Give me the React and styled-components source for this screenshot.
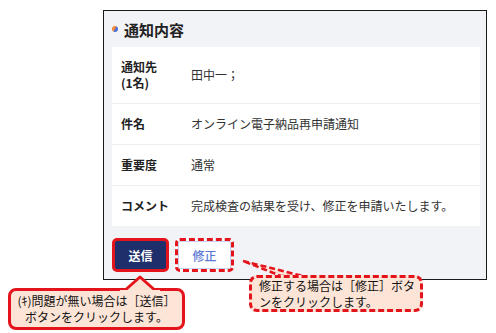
import styled, { createGlobalStyle } from "styled-components";

const GlobalStyle = createGlobalStyle`
  body {
    margin: 0;
    background: #fff;
    font-family: "Noto Sans CJK JP", "Noto Sans", sans-serif;
  }
`;

const rows = [
  { label: ["通知先", "(1名)"], value: "田中一；" },
  { label: ["件名"], value: "オンライン電子納品再申請通知" },
  { label: ["重要度"], value: "通常" },
  { label: ["コメント"], value: "完成検査の結果を受け、修正を申請いたします。" },
];

const App = () => {
  return (
    <Page>
      <GlobalStyle />
      <Frame>
        <Header>
          <Dot />
          <Title>通知内容</Title>
        </Header>
        <Card>
          {rows.map((r) => (
            <Row key={r.value}>
              <Label>
                {r.label.map((l) => (
                  <span key={l}>{l}</span>
                ))}
              </Label>
              <Value>{r.value}</Value>
            </Row>
          ))}
        </Card>
        <Footer>
          <SendButton>送信</SendButton>
          <EditButton>修正</EditButton>
        </Footer>
      </Frame>

      <Tail width="70" height="20" viewBox="0 0 70 20">
        <polygon
          points="2,2 62,17 40,17"
          fill="#fce4d6"
          stroke="#e3141c"
          strokeWidth="2.5"
          strokeDasharray="6 3"
        />
      </Tail>
      <SendNote>
        <Pointer width="40" height="18" viewBox="0 0 40 18">
          <polygon points="3,17 20,2 37,17" fill="#fce4d6" stroke="#e3141c" strokeWidth="3" strokeLinejoin="round" />
          <rect x="0" y="15" width="40" height="4" fill="#fce4d6" />
        </Pointer>
        <NoteLine>(ｷ)問題が無い場合は［送信］</NoteLine>
        <NoteLine>ボタンをクリックします。</NoteLine>
      </SendNote>
      <EditNote>
        <NoteLine>修正する場合は［修正］ボタ</NoteLine>
        <NoteLine>ンをクリックします。</NoteLine>
      </EditNote>
    </Page>
  );
};

const Page = styled.div`
  position: relative;
  width: 496px;
  height: 333px;
  box-sizing: border-box;
  padding: 10px 0 0 103px;
  overflow: hidden;
`;

const Frame = styled.div`
  width: 384px;
  height: 270px;
  box-sizing: border-box;
  border: 1px solid #1a1a1a;
  background: #f2f3f7;
  padding: 0 6px 0 8px;
`;

const Header = styled.div`
  display: flex;
  align-items: center;
  gap: 6px;
  height: 36px;
`;

const Dot = styled.span`
  width: 6px;
  height: 6px;
  border-radius: 50%;
  background: linear-gradient(120deg, #f08a3c 0%, #f08a3c 45%, #4a6fd8 55%, #4a6fd8 100%);
`;

const Title = styled.h2`
  margin: 0;
  font-size: 15px;
  font-weight: 700;
  color: #222;
`;

const Card = styled.div`
  background: #fff;
`;

const Row = styled.div`
  display: grid;
  grid-template-columns: 70px 1fr;
  align-items: center;
  padding: 12px 9px;
  border-bottom: 1px solid #eeeff2;

  &:last-child {
    border-bottom: none;
  }
`;

const Label = styled.div`
  display: flex;
  flex-direction: column;
  font-size: 12px;
  line-height: 16px;
  font-weight: 700;
  color: #222;
`;

const Value = styled.div`
  font-size: 12px;
  line-height: 16px;
  color: #333;
`;

const Footer = styled.div`
  display: flex;
  gap: 6px;
  padding-top: 12px;
`;

const SendButton = styled.button`
  width: 57px;
  height: 34px;
  box-sizing: border-box;
  border: 3px solid #e3141c;
  border-radius: 5px;
  background: #1f2f6b;
  color: #fff;
  font-family: inherit;
  font-size: 12px;
  font-weight: 700;
`;

const EditButton = styled.button`
  width: 59px;
  height: 34px;
  box-sizing: border-box;
  border: 3px dashed #e3141c;
  border-radius: 5px;
  background: #fff;
  box-shadow: inset 0 0 0 1px #c9d3f3;
  color: #5a78d6;
  font-family: inherit;
  font-size: 12px;
  font-weight: 500;
`;

const Tail = styled.svg`
  position: absolute;
  left: 241px;
  top: 259px;
  overflow: visible;
`;

const SendNote = styled.div`
  position: absolute;
  left: 8px;
  top: 288px;
  width: 177px;
  height: 42px;
  box-sizing: border-box;
  border: 3px solid #e3141c;
  border-radius: 8px;
  background: #fce4d6;
  display: flex;
  flex-direction: column;
  justify-content: center;
  align-items: center;
`;

const Pointer = styled.svg`
  position: absolute;
  left: 109px;
  top: -16px;
  overflow: visible;
`;

const EditNote = styled.div`
  position: absolute;
  left: 249px;
  top: 275px;
  width: 174px;
  height: 37px;
  box-sizing: border-box;
  border: 3px dashed #e3141c;
  border-radius: 8px;
  background: #fce4d6;
  display: flex;
  flex-direction: column;
  justify-content: center;
  padding-left: 7px;
`;

const NoteLine = styled.div`
  font-size: 12px;
  line-height: 16px;
  color: #111;
  white-space: nowrap;
`;

export default App;
